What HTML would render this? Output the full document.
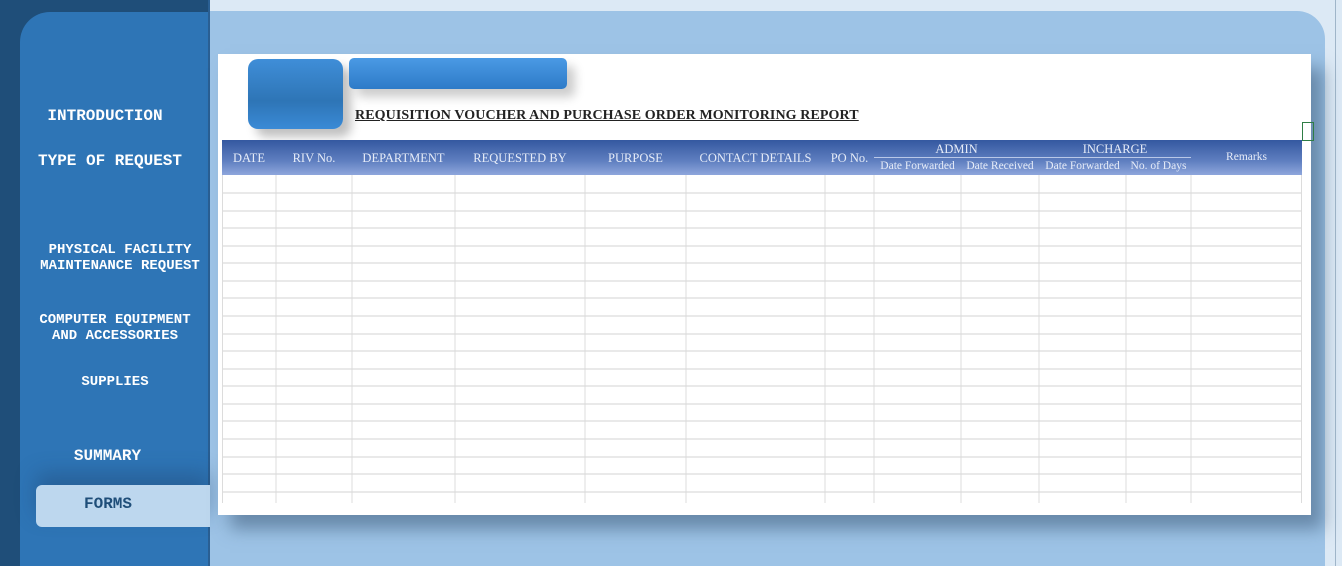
<!DOCTYPE html>
<html><head><meta charset="utf-8"><style>
*{margin:0;padding:0;box-sizing:border-box}
body{width:1342px;height:566px;overflow:hidden;background:#dce9f5;position:relative;font-family:"Liberation Serif",serif}
.abs{position:absolute}
#dark{left:0;top:0;width:208px;height:566px;background:#1f4e79}
#side{left:20px;top:12px;width:188px;height:554px;background:#2e75b6;border-top-left-radius:30px}
#sideline{left:208px;top:0;width:2px;height:566px;background:#2a5f93}
#main{left:210px;top:11px;width:1115px;height:555px;background:#9dc3e6;border-top-right-radius:28px}
#rline{left:1335px;top:0;width:1px;height:566px;background:#9fb5c9}
.nav{color:#fff;font-family:"Liberation Mono",monospace;font-weight:bold;text-align:center;position:absolute;font-size:16px;line-height:16px;white-space:nowrap}
.sm{font-size:14px}
#forms{left:36px;top:485px;width:174px;height:42px;background:#bdd7ee;border-radius:6px 0 0 6px;color:#1f4e79;font-family:"Liberation Mono",monospace;font-weight:bold;font-size:16px;line-height:38px;padding-left:48px;box-shadow:0 -12px 20px rgba(30,60,100,.35)}
#sheet{left:218px;top:54px;width:1093px;height:461px;background:#fff;box-shadow:12px 14px 16px rgba(60,90,120,.55)}
.btn1{left:248px;top:59px;width:95px;height:70px;background:linear-gradient(#3f8ed8,#2e75b6 60%,#3a8ad6);border-radius:10px;box-shadow:8px 8px 10px rgba(0,0,0,.25)}
.btn2{left:349px;top:58px;width:218px;height:31px;background:linear-gradient(#4a9ae4,#2e7bc8);border-radius:5px;box-shadow:8px 8px 10px rgba(0,0,0,.2)}
#title{left:355px;top:108px;font-size:14px;text-decoration:underline;color:#222;font-weight:bold;letter-spacing:.1px;white-space:nowrap}
#hdr{left:222px;top:140px;width:969px;height:35px;background:linear-gradient(#3458a0,#5f7fc0 60%,#8ea6dc)}
#hdr2{left:1191px;top:140px;width:111px;height:35px;background:linear-gradient(#3458a0,#5f7fc0 60%,#8ea6dc)}
.h{position:absolute;color:#e6ecf8;font-size:12.5px;text-align:center;white-space:nowrap}
.s{font-size:11.5px}
#grid{left:222px;top:175px;width:1080px;height:330px}
#gbox{left:1302px;top:122px;width:12px;height:19px;border:1px solid #2e7d45}
</style></head><body>
<div class="abs" id="dark"></div>
<div class="abs" id="side"></div>
<div class="abs" id="main"></div>
<div class="abs" id="sideline"></div>
<div class="abs" id="rline"></div>
<div class="nav" style="left:20px;top:108px;width:170px">INTRODUCTION</div>
<div class="nav" style="left:20px;top:153px;width:180px">TYPE OF REQUEST</div>
<div class="nav sm" style="left:30px;top:242px;width:180px">PHYSICAL FACILITY<br>MAINTENANCE REQUEST</div>
<div class="nav sm" style="left:20px;top:312px;width:190px">COMPUTER EQUIPMENT<br>AND ACCESSORIES</div>
<div class="nav sm" style="left:20px;top:374px;width:190px">SUPPLIES</div>
<div class="nav" style="left:20px;top:448px;width:175px">SUMMARY</div>
<div class="abs" id="forms">FORMS</div>
<div class="abs" id="sheet"></div>
<div class="abs btn1"></div><div class="abs btn2"></div>
<div class="abs" id="title">REQUISITION VOUCHER AND PURCHASE ORDER MONITORING REPORT</div>
<div class="abs" id="gbox"></div>
<div class="abs" id="hdr"></div><div class="abs" id="hdr2"></div>
<div class="abs" style="left:874px;top:157px;width:317px;height:1px;background:#b9c8e8"></div>
<div class="h" style="left:222px;top:151px;width:54px">DATE</div>
<div class="h" style="left:276px;top:151px;width:76px">RIV No.</div>
<div class="h" style="left:352px;top:151px;width:103px">DEPARTMENT</div>
<div class="h" style="left:455px;top:151px;width:130px">REQUESTED BY</div>
<div class="h" style="left:585px;top:151px;width:101px">PURPOSE</div>
<div class="h" style="left:686px;top:151px;width:139px">CONTACT DETAILS</div>
<div class="h" style="left:825px;top:151px;width:49px">PO No.</div>
<div class="h" style="left:874px;top:142px;width:165px">ADMIN</div>
<div class="h" style="left:1039px;top:142px;width:152px">INCHARGE</div>
<div class="h s" style="left:874px;top:160px;width:87px">Date Forwarded</div>
<div class="h s" style="left:961px;top:160px;width:78px">Date Received</div>
<div class="h s" style="left:1039px;top:160px;width:87px">Date Forwarded</div>
<div class="h s" style="left:1126px;top:160px;width:65px">No. of Days</div>
<div class="h s" style="left:1191px;top:151px;width:111px">Remarks</div>
<svg class="abs" id="grid" width="1080" height="330" viewBox="0 0 1080 330">
<g stroke="#e2e2e2" stroke-width="1.5">
<line x1="0" y1="18" x2="1080" y2="18"/><line x1="0" y1="36" x2="1080" y2="36"/><line x1="0" y1="53" x2="1080" y2="53"/><line x1="0" y1="71" x2="1080" y2="71"/><line x1="0" y1="88" x2="1080" y2="88"/><line x1="0" y1="106" x2="1080" y2="106"/><line x1="0" y1="123" x2="1080" y2="123"/><line x1="0" y1="141" x2="1080" y2="141"/><line x1="0" y1="159" x2="1080" y2="159"/><line x1="0" y1="176" x2="1080" y2="176"/><line x1="0" y1="194" x2="1080" y2="194"/><line x1="0" y1="211" x2="1080" y2="211"/><line x1="0" y1="229" x2="1080" y2="229"/><line x1="0" y1="246" x2="1080" y2="246"/><line x1="0" y1="264" x2="1080" y2="264"/><line x1="0" y1="282" x2="1080" y2="282"/><line x1="0" y1="299" x2="1080" y2="299"/><line x1="0" y1="317" x2="1080" y2="317"/>
</g>
<g stroke="#dcdcdc" stroke-width="1">
<line x1="0.5" y1="0" x2="0.5" y2="328"/><line x1="54" y1="0" x2="54" y2="328"/><line x1="130" y1="0" x2="130" y2="328"/><line x1="233" y1="0" x2="233" y2="328"/><line x1="363" y1="0" x2="363" y2="328"/><line x1="464" y1="0" x2="464" y2="328"/><line x1="603" y1="0" x2="603" y2="328"/><line x1="652" y1="0" x2="652" y2="328"/><line x1="739" y1="0" x2="739" y2="328"/><line x1="817" y1="0" x2="817" y2="328"/><line x1="904" y1="0" x2="904" y2="328"/><line x1="969" y1="0" x2="969" y2="328"/><line x1="1079.5" y1="0" x2="1079.5" y2="328"/>
</g></svg>
</body></html>
